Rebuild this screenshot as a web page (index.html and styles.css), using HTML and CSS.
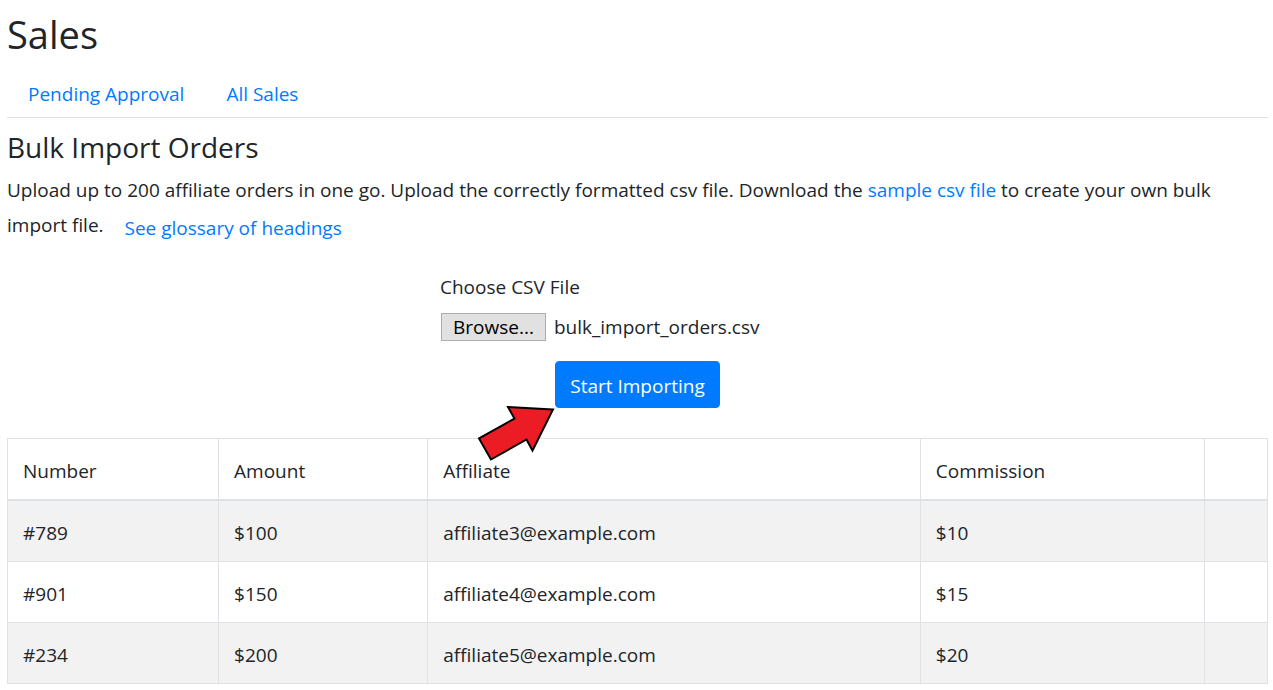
FILE: index.html
```html
<!DOCTYPE html>
<html lang="en">
<head>
<meta charset="utf-8">
<meta name="viewport" content="width=device-width, initial-scale=1">
<title>Sales</title>
<link rel="stylesheet" href="styles.css">
</head>
<body>
<main class="page">
  <h1 class="title">Sales</h1>
  <nav class="tabs">
    <a class="tab" href="#pending">Pending Approval</a>
    <a class="tab" href="#all">All Sales</a>
  </nav>
  <h2 class="subtitle">Bulk Import Orders</h2>
  <p class="intro">Upload up to 200 affiliate orders in one go. Upload the correctly formatted csv file. Download the <a href="#sample">sample csv file</a> to create your own bulk import file. <a class="glossary" href="#glossary">See glossary of headings</a></p>
  <form class="import">
    <div class="field">
      <label for="browse">Choose CSV File</label>
      <div class="file">
        <button class="browse" id="browse" type="button">Browse...</button>
        <span>bulk_import_orders.csv</span>
      </div>
    </div>
    <div class="submit">
      <button class="start" type="button">Start Importing</button>
      <svg class="arrow" viewBox="0 0 82 60" aria-hidden="true">
        <path d="M78 6.500 33 4 39.500 15.500 4 35.500 16 56.500 51.500 36.500 57.500 47.500Z" fill="#ec1c24" stroke="#000" stroke-width="2"/>
      </svg>
    </div>
  </form>
  <table class="orders">
    <colgroup><col class="c-number"><col class="c-amount"><col class="c-affiliate"><col class="c-commission"><col class="c-extra"></colgroup>
    <thead>
      <tr><th>Number</th><th>Amount</th><th>Affiliate</th><th>Commission</th><th></th></tr>
    </thead>
    <tbody>
      <tr><td>#789</td><td>$100</td><td>affiliate3@example.com</td><td>$10</td><td></td></tr>
      <tr><td>#901</td><td>$150</td><td>affiliate4@example.com</td><td>$15</td><td></td></tr>
      <tr><td>#234</td><td>$200</td><td>affiliate5@example.com</td><td>$20</td><td></td></tr>
    </tbody>
  </table>
</main>
</body>
</html>
```
FILE: styles.css
```css
* { box-sizing: border-box; }
body {
  margin: 0;
  background: #fff;
  color: #212529;
  font: 19px/30px "Segoe UI", "Open Sans", sans-serif;
}
a { color: #007bff; text-decoration: none; }
.page { padding: 10px 5px 6px 7px; }
.title { margin: 0 0 12px; font-size: 38px; line-height: 48px; font-weight: 400; }
.tabs { display: flex; border-bottom: 1px solid #dee2e6; }
.tab { padding: 9px 21px 8px; }
.subtitle { margin: 11px 0 10px; font-size: 28px; line-height: 36px; font-weight: 400; }
.intro { margin: 0; }
.glossary { display: inline-block; padding: 8px 16px 6px; vertical-align: middle; }
.import { display: flex; flex-direction: column; align-items: center; margin: 23px 0 30px; }
.field { width: 395px; max-width: 100%; }
.field label { display: block; margin-bottom: 10px; }
.file { display: flex; align-items: center; gap: 8px; }
.browse {
  height: 28px;
  margin-left: 1px;
  padding: 0 11px;
  border: 1px solid #adadad;
  background: #e1e1e1;
  color: #000;
  font: 19px/26px "Segoe UI", "Open Sans", sans-serif;
}
.submit { position: relative; margin-top: 19px; }
.start {
  display: block;
  padding: 9px 14px 6px;
  border: 1px solid #007bff;
  border-radius: 4px;
  background: #007bff;
  color: #fff;
  font: inherit;
}
.arrow { position: absolute; left: -80px; top: 42px; width: 82px; height: 60px; }
.orders { width: 100%; table-layout: fixed; border-collapse: collapse; }
.orders th, .orders td {
  height: 61px;
  padding: 17px 15px 13px;
  border: 1px solid #dee2e6;
  text-align: left;
  font-weight: 400;
}
.orders thead th { border-bottom-width: 2px; }
.orders tbody tr:nth-child(odd) { background: #f2f2f2; }
.c-number { width: 16.75%; }
.c-amount { width: 16.6%; }
.c-affiliate { width: 39.1%; }
.c-commission { width: 22.55%; }
.c-extra { width: 5%; }
```
